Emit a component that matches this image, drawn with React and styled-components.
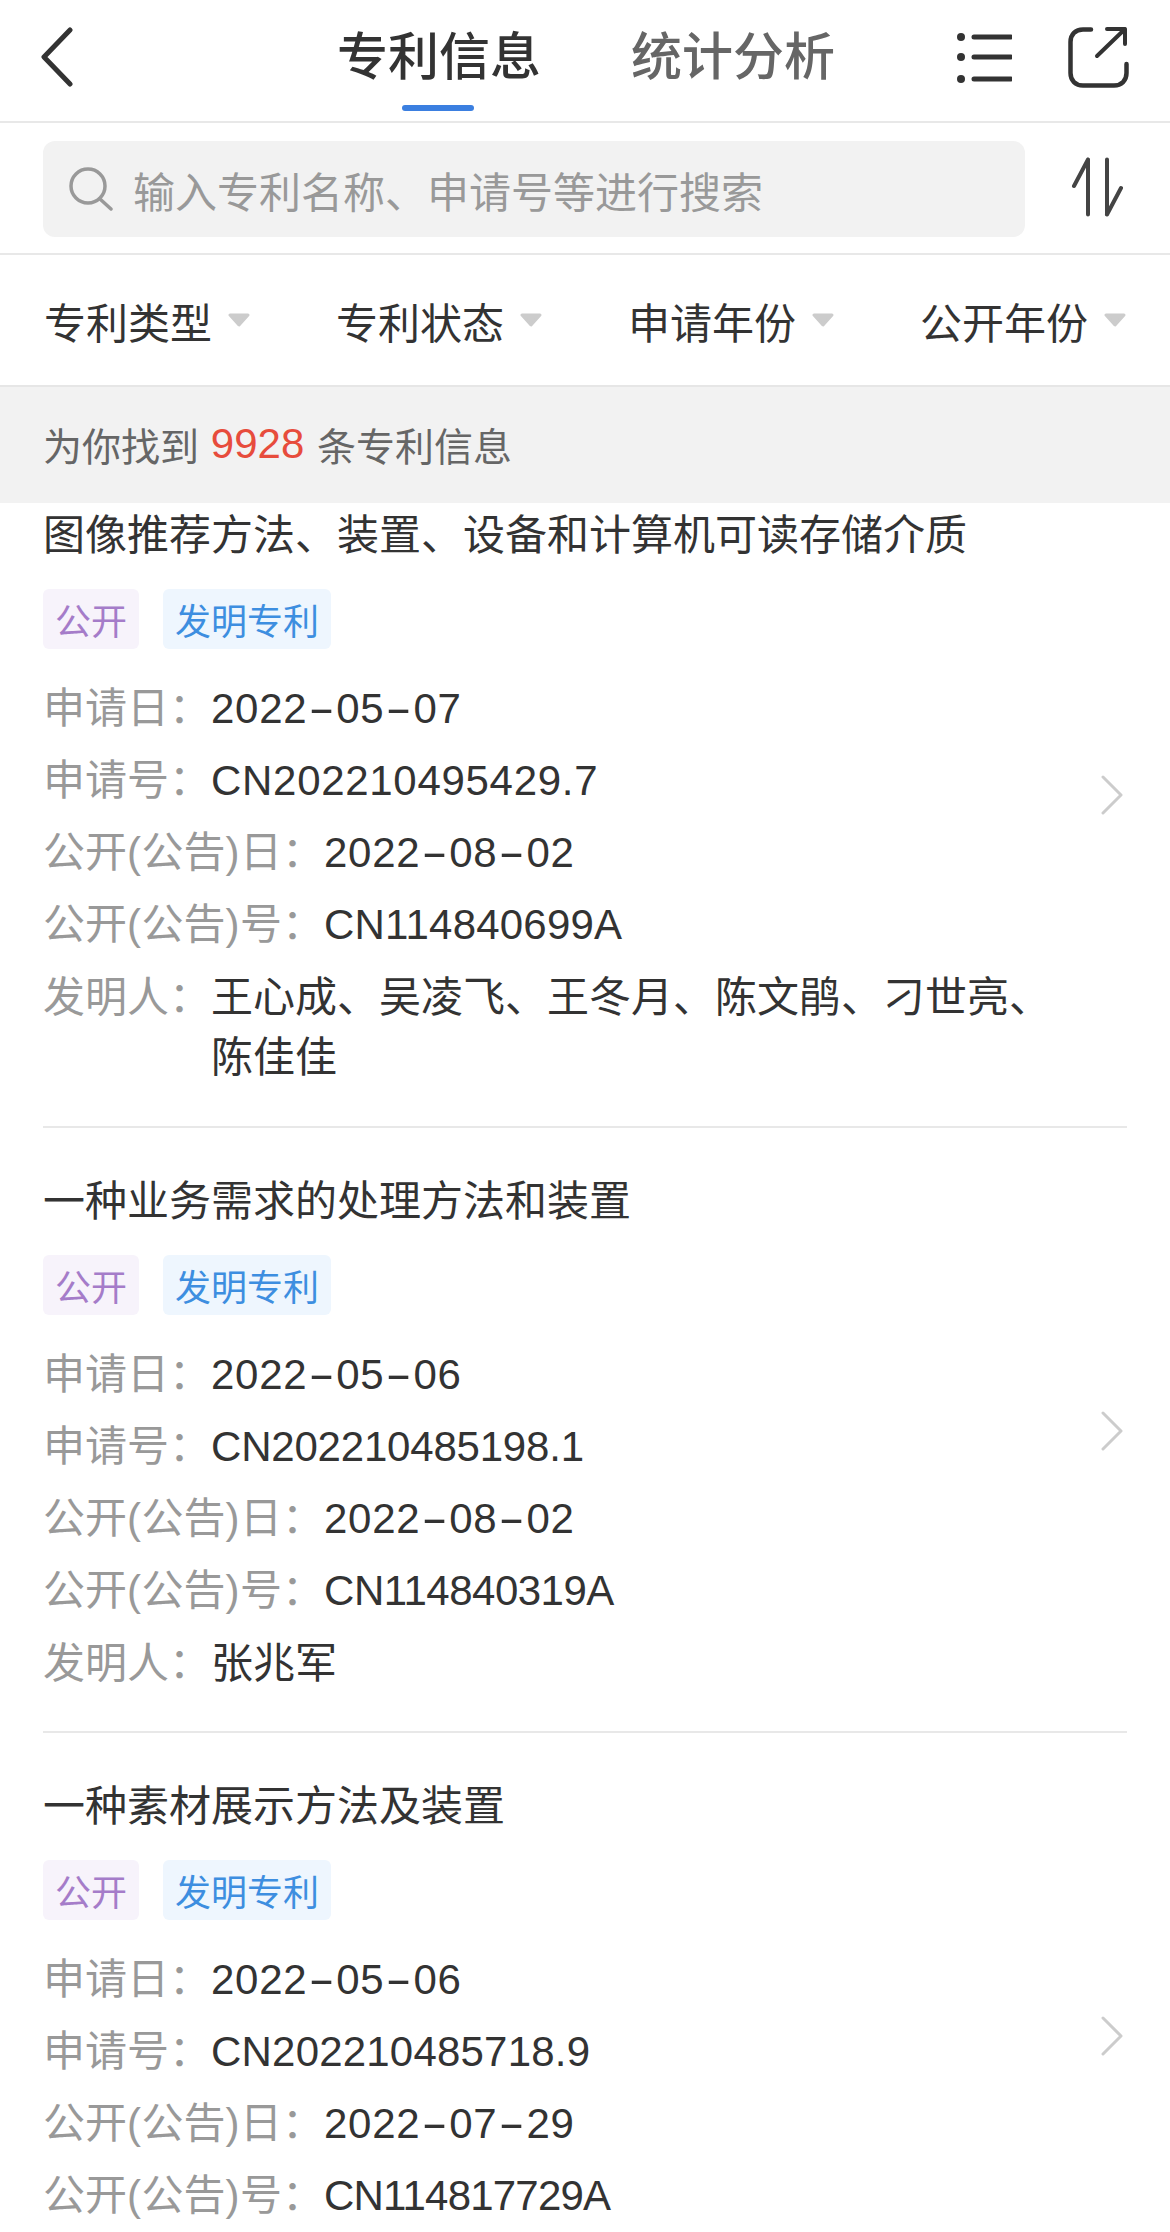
import React from "react";
import styled, { createGlobalStyle } from "styled-components";

const Global = createGlobalStyle`
  html, body { margin: 0; padding: 0; background: #fff; }
  * { box-sizing: border-box; }
`;

const Page = styled.div`
  width: 1170px;
  height: 2232px;
  overflow: hidden;
  background: #fff;
  font-family: "Liberation Sans", "Noto Sans CJK SC", sans-serif;
  color: #333;
`;

const Nav = styled.header`
  height: 123px;
  display: flex;
  align-items: flex-start;
  border-bottom: 2px solid #e8e8e8;
  padding-left: 41px;
`;

const NavIcon = styled.svg`
  display: block;
  flex: none;
  margin-top: ${(p) => p.$top}px;
  margin-left: ${(p) => p.$left || 0}px;
`;

const Tabs = styled.nav`
  display: flex;
  gap: 94px;
  margin-left: 264px;
  margin-right: 125px;
`;

const Tab = styled.div`
  position: relative;
  width: 200px;
  height: 122px;
  padding-top: 25px;
  font-size: 51px;
  line-height: 66px;
  font-weight: 500;
  white-space: nowrap;
  color: ${(p) => (p.$active ? "#333" : "#666")};
  ${(p) =>
    p.$active &&
    `&::after {
      content: "";
      position: absolute;
      left: 65px;
      top: 105px;
      width: 72px;
      height: 6px;
      border-radius: 3px;
      background: #3b7fe0;
    }`}
`;

const SearchRow = styled.section`
  height: 132px;
  display: flex;
  align-items: flex-start;
  padding: 18px 0 0 43px;
  border-bottom: 2px solid #e8e8e8;
`;

const SearchBox = styled.div`
  width: 982px;
  height: 96px;
  display: flex;
  align-items: center;
  gap: 19px;
  padding-left: 25px;
  border-radius: 12px;
  background: #f2f2f2;
  font-size: 42px;
  color: #999;
  white-space: nowrap;
`;

const SearchIcon = styled.svg`
  display: block;
  flex: none;
`;

const SortIcon = styled.svg`
  display: block;
  flex: none;
  margin: 16px 0 0 46px;
`;

const Filters = styled.section`
  height: 132px;
  display: flex;
  align-items: center;
  justify-content: space-between;
  padding: 0 44px 0 44px;
  border-bottom: 2px solid #e6e6e6;
`;

const Filter = styled.div`
  display: flex;
  align-items: center;
  gap: 16px;
  font-size: 42px;
  color: #333;
  white-space: nowrap;
`;

const Caret = styled.svg`
  display: block;
`;

const CountBar = styled.section`
  height: 116px;
  display: flex;
  align-items: center;
  padding: 0 0 2px 43px;
  background: #f2f2f2;
  font-size: 39px;
  color: #666;
  white-space: pre;
`;

const Count = styled.span`
  margin: 0 2px 0 1px;
  font-size: 42px;
  color: #e74c3c;
`;

const List = styled.main`
  padding: 0 43px;
`;

const Item = styled.article`
  min-height: 605px;
  display: flex;
  padding: 45px 0 36px;
  border-bottom: 2px solid #e8e8e8;
  &:first-child {
    padding-top: 4px;
    padding-bottom: 38px;
  }
`;

const ItemBody = styled.div`
  flex: 1;
  min-width: 0;
`;

const Title = styled.h3`
  margin: 0;
  font-size: 42px;
  line-height: 58px;
  font-weight: 400;
  color: #333;
  white-space: nowrap;
`;

const Tags = styled.div`
  display: flex;
  gap: 24px;
  margin: 24px 0 31px;
`;

const Tag = styled.span`
  height: 60px;
  display: flex;
  align-items: center;
  padding: 0 12px;
  border-radius: 6px;
  font-size: 36px;
  color: ${(p) => (p.$kind === "status" ? "#a57cc9" : "#3d8ee0")};
  background: ${(p) => (p.$kind === "status" ? "#f7f3fb" : "#eef6fe")};
`;

const Rows = styled.dl`
  margin: 0;
  display: flex;
  flex-direction: column;
  gap: 14px;
  font-size: 42px;
  line-height: 58px;
`;

const Row = styled.div`
  display: flex;
  align-items: flex-start;
  line-height: ${(p) => (p.$tall ? 60 : 58)}px;
`;

const Label = styled.dt`
  flex: none;
  color: #999;
  white-space: nowrap;
`;

const Paren = styled.span`
  letter-spacing: 0.5px;
`;

const Value = styled.dd`
  margin: 0;
  width: ${(p) => (p.$wrap ? "860px" : "auto")};
  color: #333;
  letter-spacing: ${(p) => (p.$wrap ? 0 : p.$spacing ?? 0.7)}px;
  white-space: ${(p) => (p.$wrap ? "normal" : "nowrap")};
`;

const Dash = styled.span`
  display: inline-block;
  width: 29px;
  text-align: center;
  letter-spacing: 0;
  transform: scaleX(1.9);
`;

const Chevron = styled.svg`
  display: block;
  flex: none;
  align-self: center;
  margin: 0 4px 6px 0;
`;

const items = [
  {
    title: "图像推荐方法、装置、设备和计算机可读存储介质",
    date: "2022-05-07",
    app: "CN202210495429.7",
    appSpacing: 0.7,
    pubDate: "2022-08-02",
    pub: "CN114840699A",
    pubSpacing: 0.2,
    inventors: "王心成、吴凌飞、王冬月、陈文鹃、刁世亮、陈佳佳",
  },
  {
    title: "一种业务需求的处理方法和装置",
    date: "2022-05-06",
    app: "CN202210485198.1",
    appSpacing: -0.2,
    pubDate: "2022-08-02",
    pub: "CN114840319A",
    pubSpacing: -0.5,
    inventors: "张兆军",
  },
  {
    title: "一种素材展示方法及装置",
    date: "2022-05-06",
    app: "CN202210485718.9",
    appSpacing: 0.2,
    pubDate: "2022-07-29",
    pub: "CN114817729A",
    pubSpacing: -0.8,
  },
];

const DateText = ({ value }) => {
  const parts = value.split("-");
  return (
    <Value>
      {parts.map((part, i) => (
        <React.Fragment key={i}>
          {i > 0 && <Dash>-</Dash>}
          {part}
        </React.Fragment>
      ))}
    </Value>
  );
};

const FilterCaret = () => (
  <Caret width="22" height="14" viewBox="0 0 22 14">
    <path d="M2 2h18l-9 10z" fill="#cccccc" stroke="#cccccc" strokeWidth="3" strokeLinejoin="round" />
  </Caret>
);

export default function App() {
  return (
    <Page>
      <Global />
      <Nav>
        <NavIcon $top={27} width="32" height="60" viewBox="0 0 32 60" fill="none">
          <path d="M29 3L3 30l26 27" stroke="#333" strokeWidth="5" strokeLinecap="round" strokeLinejoin="round" />
        </NavIcon>
        <Tabs>
          <Tab $active>专利信息</Tab>
          <Tab>统计分析</Tab>
        </Tabs>
        <NavIcon $top={31} width="56" height="52" viewBox="0 0 56 52" fill="none">
          <circle cx="5" cy="6" r="4" fill="#333" />
          <circle cx="5" cy="26" r="4" fill="#333" />
          <circle cx="5" cy="48" r="4" fill="#333" />
          <path d="M18 6h37M18 26h37M18 48h37" stroke="#333" strokeWidth="5" strokeLinecap="round" />
        </NavIcon>
        <NavIcon $top={26} $left={55} width="62" height="62" viewBox="0 0 62 62" fill="none">
          <path
            d="M24 3.5H16C8.5 3.5 3.5 8.5 3.5 16v31c0 7.500 5 12.500 12.500 12.500h31c7.500 0 12.500-5 12.500-12.500V38"
            stroke="#333"
            strokeWidth="4.500"
            strokeLinecap="round"
          />
          <path d="M30 30L58 3M40 3h18v15" stroke="#333" strokeWidth="4" strokeLinecap="round" strokeLinejoin="round" />
        </NavIcon>
      </Nav>

      <SearchRow>
        <SearchBox>
          <SearchIcon width="46" height="44" viewBox="0 0 46 44" fill="none">
            <circle cx="20" cy="19" r="17" stroke="#999" strokeWidth="3.5" />
            <path d="M32 32l11 10" stroke="#999" strokeWidth="3.500" strokeLinecap="round" />
          </SearchIcon>
          输入专利名称、申请号等进行搜索
        </SearchBox>
        <SortIcon width="52" height="60" viewBox="0 0 52 60" fill="none">
          <path d="M17 2.500v55M17 2.500L3 29M36 2.500v55M36 57.500L50 31" stroke="#444" strokeWidth="4" strokeLinecap="round" strokeLinejoin="round" />
        </SortIcon>
      </SearchRow>

      <Filters>
        {["专利类型", "专利状态", "申请年份", "公开年份"].map((name) => (
          <Filter key={name}>
            {name}
            <FilterCaret />
          </Filter>
        ))}
      </Filters>

      <CountBar>
        为你找到 <Count>9928</Count> 条专利信息
      </CountBar>

      <List>
        {items.map((item) => (
          <Item key={item.app}>
            <ItemBody>
              <Title>{item.title}</Title>
              <Tags>
                <Tag $kind="status">公开</Tag>
                <Tag $kind="type">发明专利</Tag>
              </Tags>
              <Rows>
                <Row>
                  <Label>申请日：</Label>
                  <DateText value={item.date} />
                </Row>
                <Row>
                  <Label>申请号：</Label>
                  <Value $spacing={item.appSpacing}>{item.app}</Value>
                </Row>
                <Row>
                  <Label>公开<Paren>(</Paren>公告<Paren>)</Paren>日：</Label>
                  <DateText value={item.pubDate} />
                </Row>
                <Row>
                  <Label>公开<Paren>(</Paren>公告<Paren>)</Paren>号：</Label>
                  <Value $spacing={item.pubSpacing}>{item.pub}</Value>
                </Row>
                {item.inventors && (
                  <Row $tall>
                    <Label>发明人：</Label>
                    <Value $wrap>{item.inventors}</Value>
                  </Row>
                )}
              </Rows>
            </ItemBody>
            <Chevron width="22" height="40" viewBox="0 0 22 40" fill="none">
              <path d="M2 2l18 18L2 38" stroke="#cccccc" strokeWidth="3" strokeLinecap="round" strokeLinejoin="round" />
            </Chevron>
          </Item>
        ))}
      </List>
    </Page>
  );
}
